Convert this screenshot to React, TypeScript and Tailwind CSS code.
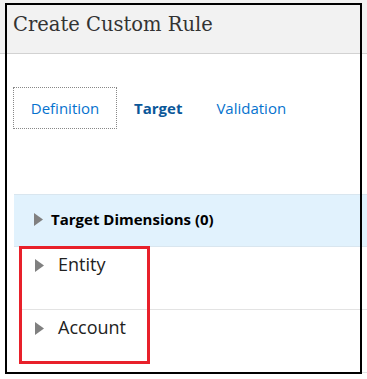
import React from 'react';

function Caret() {
  return (
    <svg width="9" height="13" viewBox="0 0 9 13" className="shrink-0">
      <path d="M0 0 L9 6.5 L0 13 Z" fill="#808080" />
    </svg>
  );
}

export default function App() {
  const ui = { fontFamily: '"Open Sans", "Noto Sans", sans-serif' };

  return (
    <div className="relative h-[379px] w-[367px] overflow-hidden bg-white" style={ui}>
      <div className="h-[54px] border-b border-[#d2d2d2] bg-[#f2f2f2] pl-[13px] pt-[11px]">
        <h1
          className="text-[19.5px] leading-[28px] text-[#333333]"
          style={{ fontFamily: '"DejaVu Serif", Georgia, serif' }}
        >
          Create Custom Rule
        </h1>
      </div>

      <div className="mt-[33px] flex items-center pl-[13px]">
        <div className="flex h-[42px] w-[104px] items-center justify-center border border-dotted border-[#888888] text-[15px] text-[#0572ce]">
          Definition
        </div>
        <div className="ml-[17px] text-[15px] font-bold text-[#0b5799]">Target</div>
        <div className="ml-[34px] text-[15px] text-[#0572ce]">Validation</div>
      </div>

      <div className="mt-[65px] ml-[14px] flex h-[53px] items-center gap-[8px] border-y border-[#d9e6ef] bg-[#e1f2fd] pb-[3px] pl-[20px]">
        <Caret />
        <span className="text-[15px] font-bold text-black">Target Dimensions (0)</span>
      </div>

      <div className="ml-[20px]">
        <div className="flex h-[63px] items-start gap-[14px] border-b border-[#e3e3e3] pt-[4px] pl-[15px]">
          <span className="mt-[8px]"><Caret /></span>
          <span className="text-[18px] text-[#222222]">Entity</span>
        </div>
        <div className="flex h-[63px] items-start gap-[14px] border-b border-[#e3e3e3] pt-[4px] pl-[15px]">
          <span className="mt-[8px]"><Caret /></span>
          <span className="text-[18px] text-[#222222]">Account</span>
        </div>
      </div>

      <div className="pointer-events-none absolute left-[5px] top-[3px] h-[371px] w-[357px] border-2 border-black" />
      <div className="pointer-events-none absolute left-[19px] top-[246px] h-[118px] w-[131px] border-[3px] border-[#e8202a]" />
    </div>
  );
}
